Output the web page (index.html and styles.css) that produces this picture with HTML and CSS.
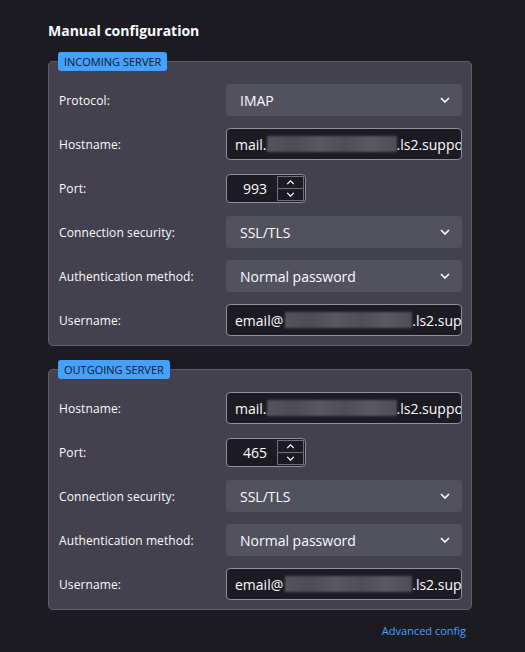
FILE: index.html
```html
<!DOCTYPE html>
<html>
<head>
<meta charset="utf-8">
<link rel="stylesheet" href="styles.css">
</head>
<body>
<main class="page">
  <h2 class="title">Manual configuration</h2>

  <fieldset class="server">
    <legend class="badge">INCOMING SERVER</legend>
    <div class="row">
      <span class="label">Protocol:</span>
      <div class="select"><span>IMAP</span><svg class="chev" viewBox="0 0 10 6"><path d="M1 1l4 4 4-4"/></svg></div>
    </div>
    <div class="row">
      <span class="label">Hostname:</span>
      <div class="input"><span>mail.</span><span class="blur"></span><span>.ls2.suppo</span></div>
    </div>
    <div class="row">
      <span class="label">Port:</span>
      <div class="port"><span class="num">993</span><div class="spin"><span class="spin-btn"><svg viewBox="0 0 10 6"><path d="M1 5l4-4 4 4"/></svg></span><span class="spin-btn"><svg viewBox="0 0 10 6"><path d="M1 1l4 4 4-4"/></svg></span></div></div>
    </div>
    <div class="row">
      <span class="label">Connection security:</span>
      <div class="select"><span>SSL/TLS</span><svg class="chev" viewBox="0 0 10 6"><path d="M1 1l4 4 4-4"/></svg></div>
    </div>
    <div class="row">
      <span class="label">Authentication method:</span>
      <div class="select"><span>Normal password</span><svg class="chev" viewBox="0 0 10 6"><path d="M1 1l4 4 4-4"/></svg></div>
    </div>
    <div class="row">
      <span class="label">Username:</span>
      <div class="input"><span>email@</span><span class="blur blur-user"></span><span>.ls2.sup</span></div>
    </div>
  </fieldset>

  <fieldset class="server">
    <legend class="badge">OUTGOING SERVER</legend>
    <div class="row">
      <span class="label">Hostname:</span>
      <div class="input"><span>mail.</span><span class="blur"></span><span>.ls2.suppo</span></div>
    </div>
    <div class="row">
      <span class="label">Port:</span>
      <div class="port"><span class="num">465</span><div class="spin"><span class="spin-btn"><svg viewBox="0 0 10 6"><path d="M1 5l4-4 4 4"/></svg></span><span class="spin-btn"><svg viewBox="0 0 10 6"><path d="M1 1l4 4 4-4"/></svg></span></div></div>
    </div>
    <div class="row">
      <span class="label">Connection security:</span>
      <div class="select"><span>SSL/TLS</span><svg class="chev" viewBox="0 0 10 6"><path d="M1 1l4 4 4-4"/></svg></div>
    </div>
    <div class="row">
      <span class="label">Authentication method:</span>
      <div class="select"><span>Normal password</span><svg class="chev" viewBox="0 0 10 6"><path d="M1 1l4 4 4-4"/></svg></div>
    </div>
    <div class="row">
      <span class="label">Username:</span>
      <div class="input"><span>email@</span><span class="blur blur-user"></span><span>.ls2.sup</span></div>
    </div>
  </fieldset>

  <div class="footer"><a class="link" href="#">Advanced config</a></div>
</main>
</body>
</html>
```

FILE: styles.css
```css
html, body {
  margin: 0;
  padding: 0;
  background: #1c1b22;
  color: #fbfbfe;
  font-family: "Open Sans", "Noto Sans", sans-serif;
}

.page {
  width: 424px;
  padding: 21px 0 0 48px;
}

.title {
  margin: 0 0 11px 0;
  font-size: 14px;
  font-weight: 700;
  line-height: 20px;
}

.server {
  margin: 0 0 14px 0;
  padding: 0 9px 9px 10px;
  border: 1px solid #5d5c67;
  border-radius: 5px;
  background: #42414d;
  display: flex;
  flex-direction: column;
  gap: 12px;
}

.badge {
  margin-left: -1px;
  margin-bottom: 13px;
  padding: 0 6px;
  height: 19px;
  line-height: 19px;
  background: #45a1ff;
  color: #15141a;
  border-radius: 3px;
  font-size: 11px;
  letter-spacing: 0;
}

.row {
  display: grid;
  grid-template-columns: 1fr 236px;
  align-items: center;
  height: 32px;
}

.label {
  font-size: 12px;
  letter-spacing: 0.1px;
}

.select {
  height: 32px;
  border-radius: 4px;
  background: #52515e;
  display: flex;
  align-items: center;
  justify-content: space-between;
  padding: 0 12px 0 14px;
  box-sizing: border-box;
  font-size: 14px;
}

.chev {
  width: 10px;
  height: 6px;
  fill: none;
  stroke: #fbfbfe;
  stroke-width: 1.6;
}

.input {
  height: 32px;
  box-sizing: border-box;
  border: 1px solid #8f8f9d;
  border-radius: 4px;
  background: #1c1b22;
  padding: 0 3px 0 8px;
  display: flex;
  align-items: center;
  white-space: nowrap;
  overflow: hidden;
  font-size: 14px;
}

.input span {
  flex: none;
}

.blur {
  display: inline-block;
  width: 130px;
  height: 16px;
  background: linear-gradient(90deg, #55545d 0%, #4d4c55 20%, #5a5962 40%, #4f4e57 60%, #5b5a63 80%, #4e4d56 100%);
  filter: blur(0.8px);
}

.blur-user {
  width: 127px;
  margin-left: 2px;
}

.port {
  width: 80px;
  height: 29px;
  box-sizing: border-box;
  border: 1px solid #8f8f9d;
  border-radius: 4px;
  background: #1c1b22;
  display: flex;
  align-items: center;
  justify-content: space-between;
  padding: 2px 1px 1px 16px;
  font-size: 14px;
}

.spin {
  width: 27px;
  height: 25px;
  box-sizing: border-box;
  border: 1px solid #6f6e79;
  display: flex;
  flex-direction: column;
}

.spin-btn {
  flex: 1;
  display: flex;
  align-items: center;
  justify-content: center;
}

.spin-btn + .spin-btn {
  border-top: 1px solid #6f6e79;
}

.spin-btn svg {
  width: 9px;
  height: 5px;
  fill: none;
  stroke: #fbfbfe;
  stroke-width: 1.5;
}

.footer {
  display: flex;
  justify-content: flex-end;
  padding-right: 6px;
  margin-top: -1px;
}

.link {
  color: #45a1ff;
  font-size: 11px;
  text-decoration: none;
}
```
